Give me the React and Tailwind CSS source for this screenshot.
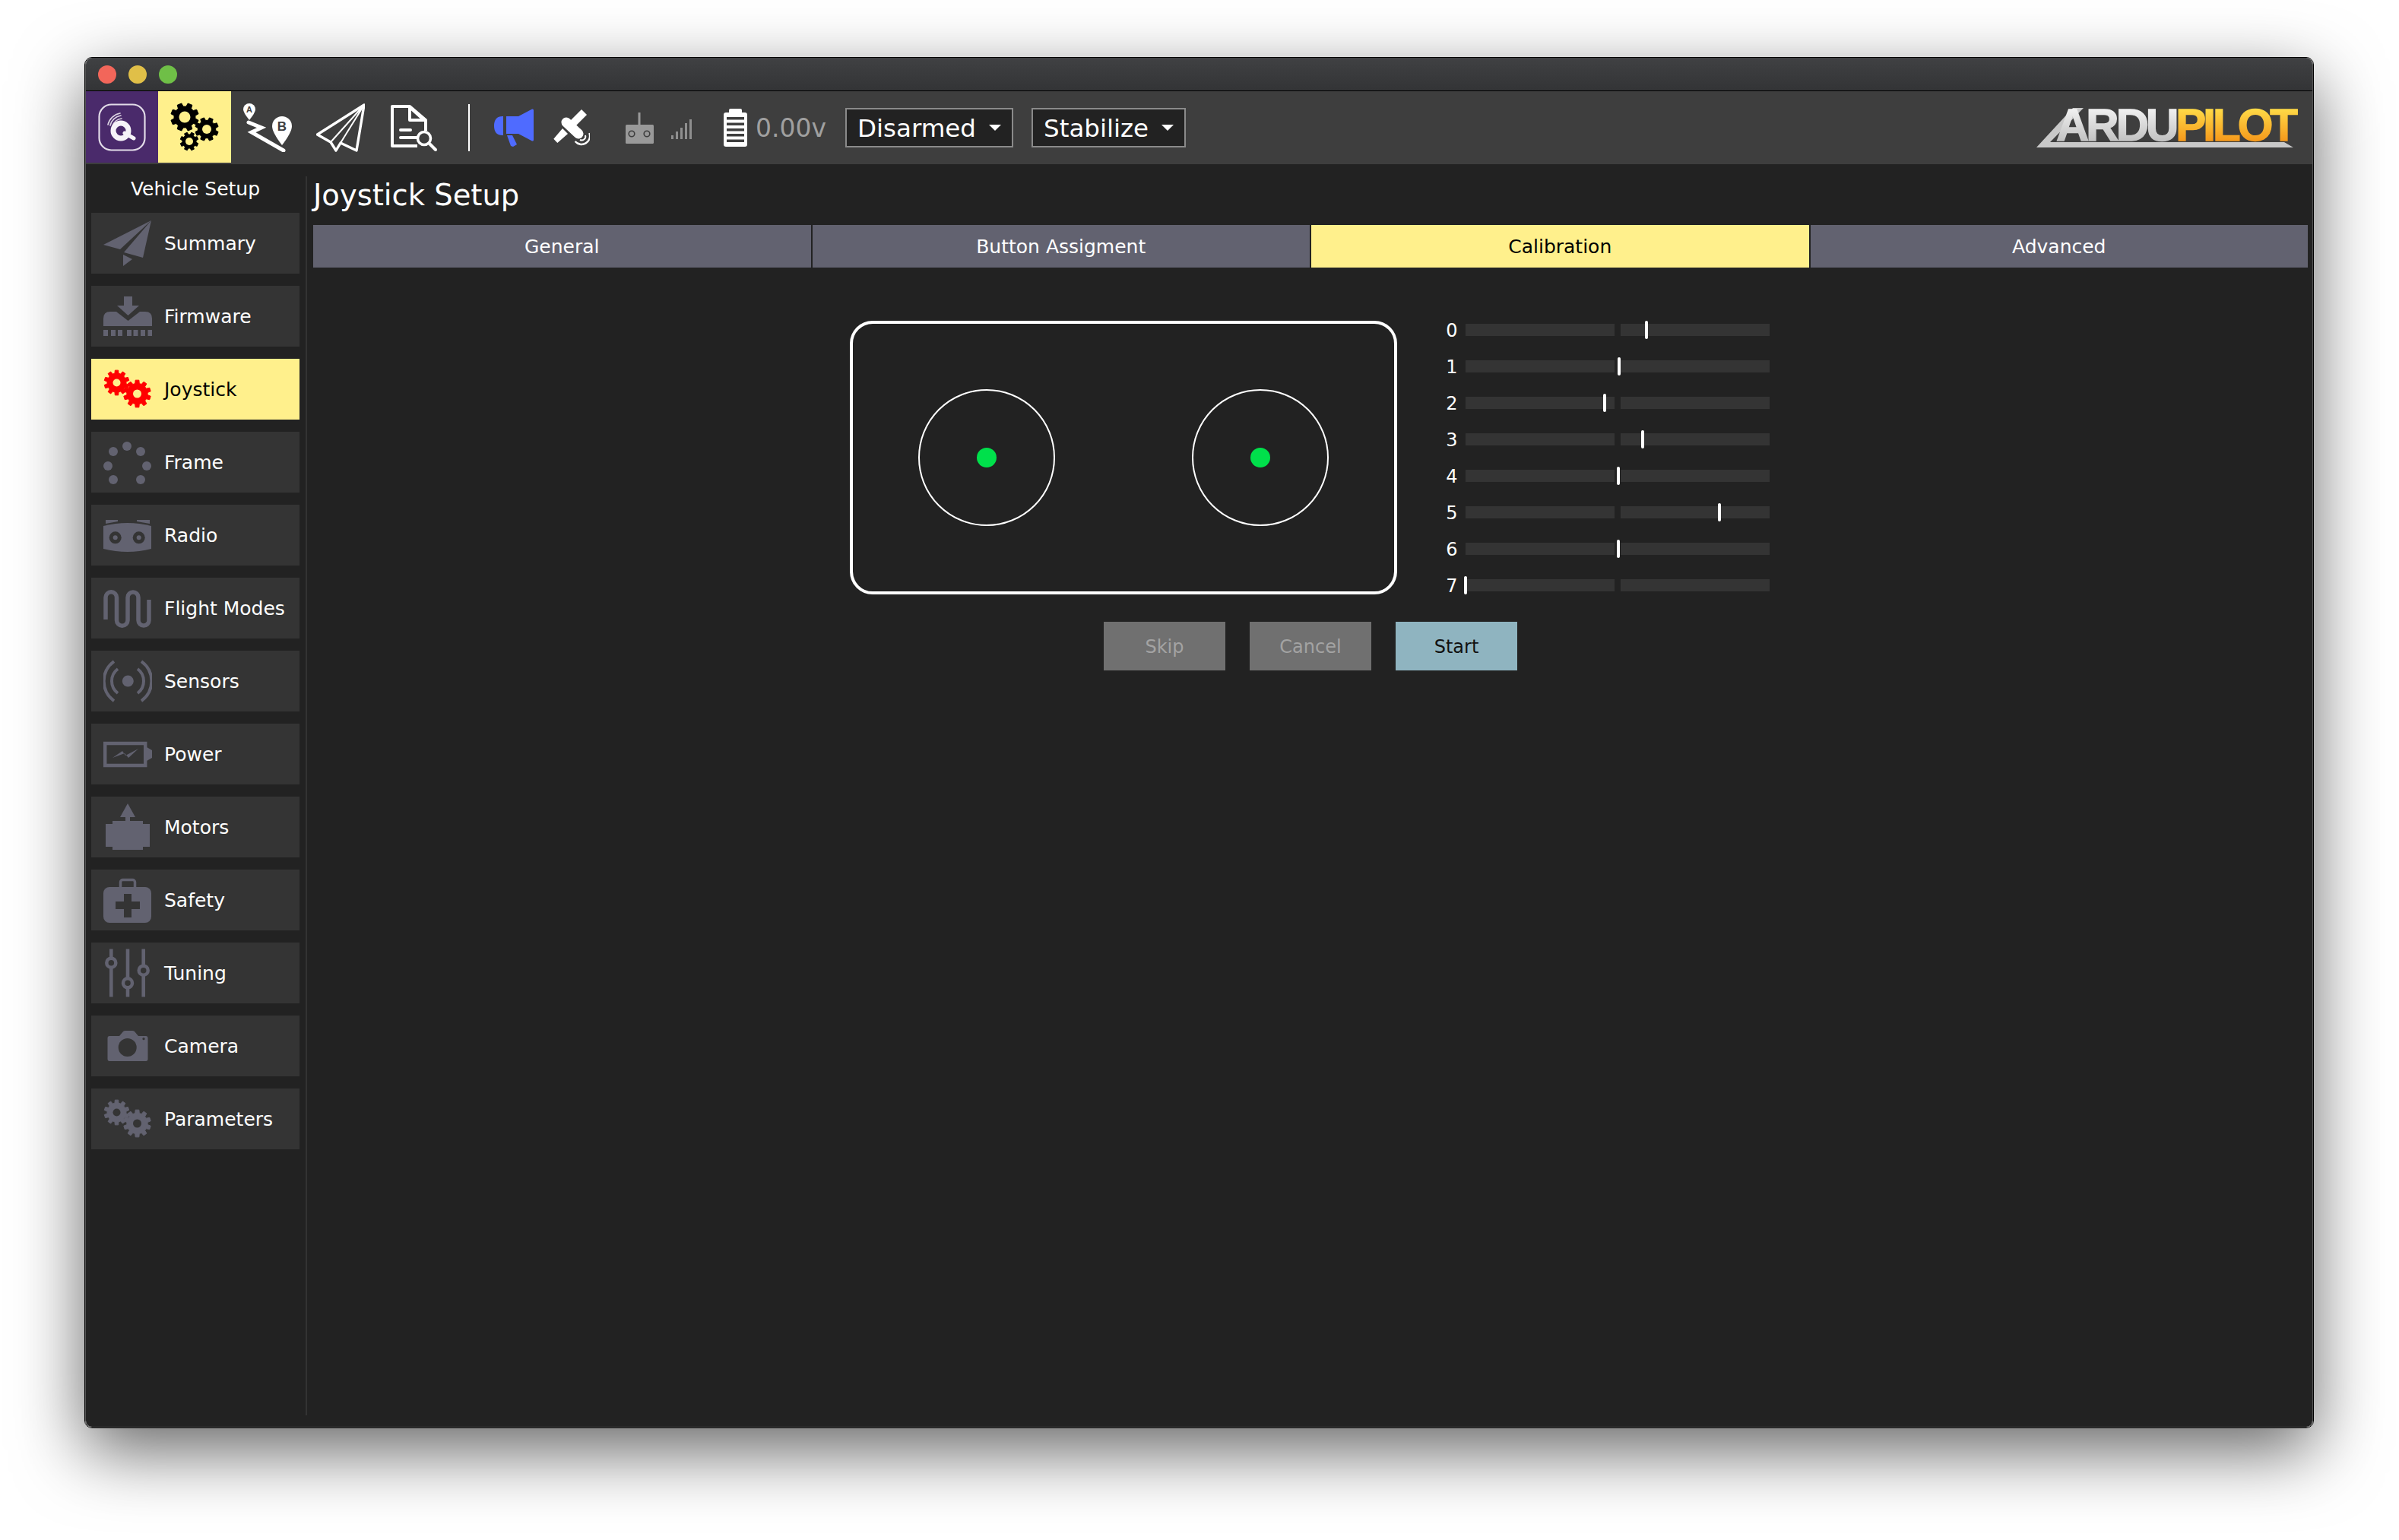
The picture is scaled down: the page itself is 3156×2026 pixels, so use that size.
const ICON = "#626270";
const ITEM = "#343434";

// teeth are plain rectangles, small gears in the picture are too blurry for more
const gearPath = (cx, cy, r, teeth = 8) => {
  const inner = r * 0.76;
  const step = (Math.PI * 2) / teeth;
  const pts = [];
  for (let i = 0; i < teeth; i++) {
    const a = i * step + step / 2;
    const w = step * 0.26;
    const pt = (rad, ang) => `${(cx + rad * Math.cos(ang)).toFixed(2)} ${(cy + rad * Math.sin(ang)).toFixed(2)}`;
    pts.push(pt(inner, a - w * 1.25), pt(r, a - w * 0.8), pt(r, a + w * 0.8), pt(inner, a + w * 1.25));
  }
  return "M" + pts.join("L") + "Z";
};

const Gear = ({ cx, cy, r, hole, fill, holeFill, teeth }) => (
  <>
    <path d={gearPath(cx, cy, r, teeth)} fill={fill} stroke={fill} strokeWidth="1" strokeLinejoin="round" />
    <circle cx={cx} cy={cy} r={hole} fill={holeFill} />
  </>
);

const TwoGears = ({ fill, holeFill }) => (
  <svg width="64" height="64" viewBox="0 0 64 64">
    <Gear cx={17.5} cy={23.5} r={16.5} hole={5} fill={fill} holeFill={holeFill} teeth={10} />
    <Gear cx={44.5} cy={38} r={18} hole={5.5} fill={fill} holeFill={holeFill} teeth={10} />
  </svg>
);

const SideIcon = ({ children }) => (
  <svg width="64" height="64" viewBox="0 0 64 64" fill={ICON}>
    {children}
  </svg>
);

const SummaryIcon = () => (
  <SideIcon>
    <polygon points="63,2 0,34 22,40" />
    <polygon points="63,2 27,44 52,51" />
    <polygon points="26,47 38,53 26,62" />
  </SideIcon>
);

const FirmwareIcon = () => (
  <SideIcon>
    <rect x="27" y="6" width="11" height="12" />
    <polygon points="18,18 47,18 32.5,31" />
    <path d="M0 45V35Q0 26 9 26H17L32.5 38L48 26H55Q64 26 64 35V45Z" />
    {[0, 10, 19, 31, 39.5, 49, 58.5].map((x) => (
      <rect key={x} x={x} y="50" width="6" height="8" />
    ))}
  </SideIcon>
);

const FrameIcon = () => (
  <SideIcon>
    {[[31, 11], [13, 18], [49, 18], [6, 37], [57, 37], [13, 55], [49, 55]].map(([x, y]) => (
      <circle key={x + "-" + y} cx={x} cy={y} r="6" />
    ))}
  </SideIcon>
);

const RadioIcon = () => (
  <SideIcon>
    <polygon points="3,12 19,12 19,14 3,17" />
    <polygon points="44,12 61,12 61,17 44,14" />
    <path d="M0 20Q32 12 63 20V50Q32 58 0 50Z" />
    <circle cx="15.7" cy="35.3" r="8" fill={ITEM} />
    <circle cx="15.7" cy="35.3" r="3" />
    <circle cx="46.7" cy="35.3" r="8" fill={ITEM} />
    <circle cx="46.7" cy="35.3" r="3" />
  </SideIcon>
);

const FlightIcon = () => (
  <SideIcon>
    <path
      d="M3 47V18A7.25 7.25 0 0 1 17.5 18V48A7.25 7.25 0 0 0 32 48V18A7 7 0 0 1 46 18V48A7 7 0 0 0 60 48V21"
      fill="none"
      stroke={ICON}
      strokeWidth="5.5"
    />
  </SideIcon>
);

const SensorsIcon = () => (
  <SideIcon>
    <circle cx="32.3" cy="32" r="7.5" />
    <g fill="none" stroke={ICON} strokeWidth="4">
      <path d="M14 6A32 32 0 0 0 14 58" />
      <path d="M50 6A32 32 0 0 1 50 58" />
      <path d="M19 16A20 20 0 0 0 19 48" />
      <path d="M45 16A20 20 0 0 1 45 48" />
    </g>
  </SideIcon>
);

const PowerIcon = () => (
  <SideIcon>
    <rect x="2.2" y="18" width="53" height="29" fill="none" stroke={ICON} strokeWidth="4.5" />
    <polygon points="57,23 64,27 64,37 57,41" />
    <polygon points="12,37 25,28 29,34 46,25 33,37 28,31" />
  </SideIcon>
);

const MotorsIcon = () => (
  <SideIcon>
    <polygon points="32,1 42,19 22,19" />
    <rect x="29" y="18" width="6" height="8" />
    <rect x="12" y="24" width="40" height="38" />
    <rect x="3" y="28" width="58" height="30" />
  </SideIcon>
);

const SafetyIcon = () => (
  <SideIcon>
    <rect x="22.5" y="5.5" width="19" height="13" rx="3" fill="none" stroke={ICON} strokeWidth="3.5" />
    <rect x="0" y="15" width="63" height="47" rx="8" />
    <rect x="16" y="34" width="32" height="10" fill={ITEM} />
    <rect x="27" y="24" width="10" height="31" fill={ITEM} />
  </SideIcon>
);

const TuningIcon = () => (
  <SideIcon>
    {[[10.3, 18.7], [32, 45.3], [52.7, 28.7]].map(([x, y]) => (
      <g key={x}>
        <rect x={x - 2.3} y="0.5" width="4.6" height="63" />
        <circle cx={x} cy={y} r="6" fill={ITEM} stroke={ICON} strokeWidth="4.5" />
      </g>
    ))}
  </SideIcon>
);

const CameraIcon = () => (
  <SideIcon>
    <path d="M21 19L26 13Q27 12 29 12H38Q40 12 41 13L46 19H56Q58.5 19 58.5 22V49Q58.5 52 56 52H8Q5.5 52 5.5 49V22Q5.5 19 8 19Z" />
    <circle cx="31.7" cy="34" r="12" fill={ITEM} />
    <circle cx="53" cy="22.7" r="1.6" fill={ITEM} />
  </SideIcon>
);

const menu = [
  { label: "Summary", icon: <SummaryIcon /> },
  { label: "Firmware", icon: <FirmwareIcon /> },
  { label: "Joystick", icon: <TwoGears fill="#ff0000" holeFill="#fff08c" />, active: true },
  { label: "Frame", icon: <FrameIcon /> },
  { label: "Radio", icon: <RadioIcon /> },
  { label: "Flight Modes", icon: <FlightIcon /> },
  { label: "Sensors", icon: <SensorsIcon /> },
  { label: "Power", icon: <PowerIcon /> },
  { label: "Motors", icon: <MotorsIcon /> },
  { label: "Safety", icon: <SafetyIcon /> },
  { label: "Tuning", icon: <TuningIcon /> },
  { label: "Camera", icon: <CameraIcon /> },
  { label: "Parameters", icon: <TwoGears fill={ICON} holeFill={ITEM} /> },
];

const tabs = ["General", "Button Assigment", "Calibration", "Advanced"];

// marker centre on each axis, in pixels from the track's left edge
const axes = [238, 202, 183, 233, 201, 334, 201, 0];

const QLogo = () => (
  <svg width="63" height="63" viewBox="0 0 63 63" fill="none">
    <rect x="1.5" y="1.5" width="60" height="60" rx="16" stroke="#e2dbe8" strokeWidth="2.2" />
    <g stroke="#d9d0e0" strokeLinecap="round" strokeWidth="1.7">
      <path d="M13 28A20 20 0 0 1 29 13" />
      <path d="M16 29A17 17 0 0 1 30 16" />
      <path d="M19 30A14 14 0 0 1 31 20" />
    </g>
    <circle cx="30" cy="36" r="10" stroke="#f6f3f8" strokeWidth="7" />
    <path d="M35 39L47 46" stroke="#f6f3f8" strokeWidth="5" strokeLinecap="round" />
  </svg>
);

const RouteIcon = () => (
  <svg width="64" height="64" viewBox="0 0 64 64">
    <path d="M8 22Q0 12 0 8A8 8 0 0 1 16 8Q16 12 8 22Z" fill="#fff" />
    <text x="8" y="12" fontSize="11" fontWeight="700" textAnchor="middle" fill="#3e3e3e" fontFamily="Liberation Sans">A</text>
    <path d="M51 55Q38 38 38 30A13 13 0 0 1 64 30Q64 38 51 55Z" fill="#fff" />
    <text x="51" y="36" fontSize="17" fontWeight="700" textAnchor="middle" fill="#3e3e3e" fontFamily="Liberation Sans">B</text>
    <path d="M7 25L24 32L11 38L53 62" fill="none" stroke="#fff" strokeWidth="5" strokeLinecap="round" strokeLinejoin="miter" />
  </svg>
);

const PlaneIcon = () => (
  <svg width="64" height="64" viewBox="0 0 64 64" fill="none" stroke="#fff" strokeLinejoin="round">
    <path d="M63 2L1.5 41L19 51L26 62L32 52L53 62Z" strokeWidth="3.4" />
    <path d="M63 2L19 51M63 2L32 52" strokeWidth="2" />
  </svg>
);

const DocIcon = () => (
  <svg width="64" height="64" viewBox="0 0 64 64" fill="none" stroke="#fff" strokeLinejoin="round">
    <path d="M37 56H4V4H27L48 22V36" strokeWidth="4" />
    <path d="M27 5V22H46Z" strokeWidth="4" />
    <path d="M15 35H28M15 45H37" strokeWidth="4" strokeLinecap="round" />
    <circle cx="46" cy="46" r="8.5" strokeWidth="3.6" />
    <path d="M53 53L61 61" strokeWidth="4" strokeLinecap="round" />
  </svg>
);

const MegaphoneIcon = () => (
  <svg width="52" height="50" viewBox="0 0 52 50" fill="#4f6bff">
    <path d="M16 10H32L50 0.5Q52 0 52 2V41Q52 43 50 42.5L32 33H16Z" />
    <path d="M12 10V35H11Q0 35 0 22.5Q0 10 11 10Z" />
    <path d="M17 35H24L30 47L25 50L22 49Z" />
  </svg>
);

const SatelliteIcon = () => (
  <svg width="48" height="49" viewBox="0 0 48 49" fill="#fff">
    <polygon points="37,0 44,7 29,22 22,15" />
    <polygon points="12,25 19,32 5.3,44 0.3,38.7" />
    <path d="M17 17L33 32" stroke="#fff" strokeWidth="13" strokeLinecap="round" />
    <g fill="none" stroke="#fff">
      <path d="M28.6 42A11 11 0 0 0 47.3 31" strokeWidth="2.4" />
      <path d="M35 40A5 5 0 0 0 42 34" strokeWidth="2" />
    </g>
  </svg>
);

const RcIcon = () => (
  <svg width="37" height="41" viewBox="0 0 37 41" fill="#999">
    <rect x="16.5" y="0" width="3" height="17" />
    <rect x="0" y="16" width="37" height="25" rx="1.5" />
    <circle cx="8" cy="28" r="3.8" fill="none" stroke="#3e3e3e" strokeWidth="1.6" />
    <circle cx="28" cy="28" r="3.8" fill="none" stroke="#3e3e3e" strokeWidth="1.6" />
  </svg>
);

const SignalIcon = () => (
  <svg width="27" height="26" viewBox="0 0 27 26" fill="#8f8f8f">
    {[[0, 5], [6, 10], [12, 15], [18, 21], [24, 26]].map(([x, h]) => (
      <rect key={x} x={x} y={26 - h} width="3" height={h} />
    ))}
  </svg>
);

const BatteryIcon = () => (
  <svg width="31" height="50" viewBox="0 0 31 50" fill="#fff">
    <rect x="7" y="0" width="17" height="7" rx="2" />
    <rect x="0" y="5" width="31" height="45" rx="3" />
    {[11, 18.5, 26, 33, 40.5].map((y) => (
      <rect key={y} x="4" y={y} width="23" height="3.5" fill="#3e3e3e" />
    ))}
  </svg>
);

const ArduLogo = () => (
  <svg width="344" height="52" viewBox="0 0 344 52">
    <defs>
      <linearGradient id="ardu-grey" x1="0" y1="0" x2="0" y2="43" gradientUnits="userSpaceOnUse">
        <stop offset="0" stopColor="#f2f2f2" />
        <stop offset="1" stopColor="#c2c2c2" />
      </linearGradient>
      <linearGradient id="ardu-gold" x1="0" y1="0" x2="0" y2="43" gradientUnits="userSpaceOnUse">
        <stop offset="0" stopColor="#ffdc48" />
        <stop offset="1" stopColor="#f59a1c" />
      </linearGradient>
    </defs>
    <polygon points="0,52 48,0 62,0 18,45 326,45 338,52" fill="#c8c8c8" />
    <text x="26" y="43" fontFamily="Liberation Sans" fontWeight="700" fontSize="60" letterSpacing="-4" strokeWidth="1.4">
      <tspan fill="url(#ardu-grey)" stroke="url(#ardu-grey)">ARDU</tspan>
      <tspan fill="url(#ardu-gold)" stroke="url(#ardu-gold)">PILOT</tspan>
    </text>
  </svg>
);

const Dropdown = ({ label, className }) => (
  <div className={`flex h-[52px] items-center border-2 border-[#8a8a8a] bg-[#222] pl-[14px] text-[32.5px] text-white ${className}`}>
    <span className="pt-[2px]">{label}</span>
    <span className="ml-auto mr-[14px] h-0 w-0 border-x-[8px] border-t-[8px] border-x-transparent border-t-white" />
  </div>
);

const Stick = () => (
  <div className="flex h-[180px] w-[180px] items-center justify-center rounded-full border-2 border-white">
    <div className="h-[26px] w-[26px] rounded-full bg-[#00e04b]" />
  </div>
);

const App = () => {
  return (
    <div className="h-[2026px] w-[3156px] overflow-hidden bg-white pl-[111px] pt-[75px] font-['DejaVu_Sans',sans-serif]">
      <div className="h-[1804px] w-[2933px] rounded-[10px] border border-black shadow-[0_30px_90px_rgba(0,0,0,0.6)]">
        <div className="flex h-full flex-col overflow-hidden rounded-[9px] border-x border-b border-[#555]">
          {/* title bar */}
          <div className="flex h-[44px] shrink-0 items-center gap-4 border-b border-black bg-gradient-to-b from-[#404143] to-[#333436] pl-[16px]">
            <div className="h-6 w-6 rounded-full bg-[#f2665a]" />
            <div className="h-6 w-6 rounded-full bg-[#e0bf48]" />
            <div className="h-6 w-6 rounded-full bg-[#6fbf47]" />
          </div>

          {/* toolbar */}
          <div className="flex h-[96px] shrink-0 items-center bg-[#3e3e3e]">
            <div className="flex h-[94px] w-[95px] shrink-0 items-center justify-center self-start bg-[#4a2a6b]">
              <QLogo />
            </div>
            <div className="flex h-[94px] w-[96px] shrink-0 items-center justify-center self-start bg-[#fff08c]">
              <svg width="64" height="64" viewBox="0 0 64 64">
                <Gear cx={19} cy={19} r={18.5} hole={7.5} fill="#000" holeFill="#fff08c" />
                <Gear cx={48} cy={35} r={15.5} hole={6} fill="#000" holeFill="#fff08c" />
                <Gear cx={25} cy={51} r={12} hole={5} fill="#000" holeFill="#fff08c" />
              </svg>
            </div>
            <div className="ml-4"><RouteIcon /></div>
            <div className="ml-8"><PlaneIcon /></div>
            <div className="ml-8"><DocIcon /></div>
            <div className="ml-[40px] h-[62px] w-[2px] bg-white" />
            <div className="ml-[32px]"><MegaphoneIcon /></div>
            <div className="ml-[26px]"><SatelliteIcon /></div>
            <div className="ml-[47px]"><RcIcon /></div>
            <div className="ml-[23px] mt-[3px]"><SignalIcon /></div>
            <div className="ml-[42px]"><BatteryIcon /></div>
            <span className="ml-[11px] pt-[2px] text-[33px] text-[#a0a0a0]">0.00v</span>
            <Dropdown label="Disarmed" className="ml-[25px] w-[221px]" />
            <Dropdown label="Stabilize" className="ml-[24px] w-[203px]" />
            <div className="ml-auto mr-[19px]"><ArduLogo /></div>
          </div>

          <div className="flex min-h-0 flex-1 bg-[#222]">
            {/* sidebar */}
            <div className="w-[289px] shrink-0 pl-[7px] pr-2">
              <div className="flex h-16 items-center justify-center pt-[2px] text-[25px] text-white">Vehicle Setup</div>
              <div className="flex flex-col gap-4">
                {menu.map((item) => (
                  <div
                    key={item.label}
                    className={`flex h-20 items-center gap-4 pl-4 text-[25px] ${item.active ? "bg-[#fff08c] text-black" : "bg-[#343434] text-white"}`}
                  >
                    {item.icon}
                    <span className="pt-[2px]">{item.label}</span>
                  </div>
                ))}
              </div>
            </div>
            <div className="mb-[15px] mt-4 w-[2px] shrink-0 bg-[#333]" />

            {/* main panel */}
            <div className="min-w-0 flex-1 pl-2 pr-[6px]">
              <div className="flex h-20 items-center pt-[1px] text-[38.5px] text-white">Joystick Setup</div>
              <div className="flex h-14 gap-[2px]">
                {tabs.map((tab) => (
                  <div
                    key={tab}
                    className={`flex flex-1 items-center justify-center pt-[2px] text-[25px] ${tab === "Calibration" ? "bg-[#fff08c] text-black" : "bg-[#626270] text-white"}`}
                  >
                    {tab}
                  </div>
                ))}
              </div>

              <div className="mt-[70px] flex justify-center pr-[2px]">
                <div className="flex h-[360px] w-[720px] items-center justify-between rounded-[30px] border-4 border-white px-[86px]">
                  <Stick />
                  <Stick />
                </div>
                <div className="ml-16 flex flex-col gap-6">
                  {axes.map((x, i) => (
                    <div key={i} className="flex h-6 items-center gap-[10px]">
                      <span className="w-4 pt-[2px] text-center text-[24px] leading-6 text-white">{i}</span>
                      <div className="relative flex h-4 w-[400px] gap-2">
                        <div className="flex-1 bg-[#343434]" />
                        <div className="flex-1 bg-[#343434]" />
                        <div
                          className="absolute top-[-4px] h-6 w-1 rounded-[2px] bg-white"
                          style={{ left: x - 2 }}
                        />
                      </div>
                    </div>
                  ))}
                </div>
              </div>

              <div className="mt-9 flex justify-center gap-8 text-[24px]">
                <div className="flex h-16 w-40 items-center justify-center bg-[#707070] pt-[2px] text-[#a3a3a3]">Skip</div>
                <div className="flex h-16 w-40 items-center justify-center bg-[#707070] pt-[2px] text-[#a3a3a3]">Cancel</div>
                <div className="flex h-16 w-40 items-center justify-center bg-[#8fb4c0] pt-[2px] text-[#111]">Start</div>
              </div>
            </div>
          </div>
        </div>
      </div>
    </div>
  );
};

export default App;
